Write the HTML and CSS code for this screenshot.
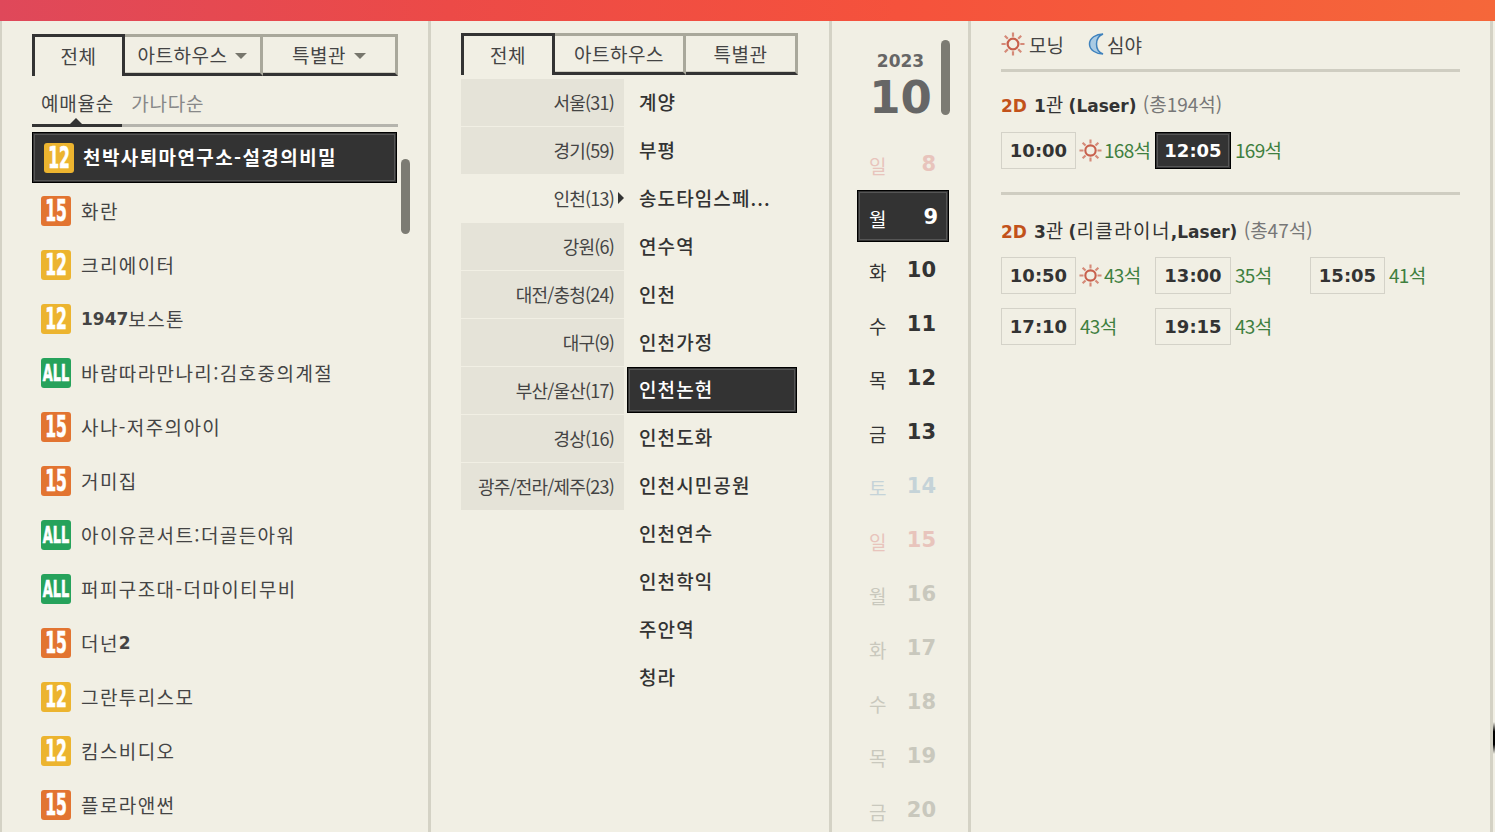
FILE: index.html
```html
<!DOCTYPE html>
<html lang="ko">
<head>
    <meta charset="UTF-8">
    <meta name="viewport" content="width=device-width, initial-scale=1.0">
    <title>빠른예매</title>
    <link rel="stylesheet" href="styles.css">
</head>
<body>
    <svg class="defs" width="0" height="0">
        <symbol id="sun" viewBox="0 0 24 24">
            <circle cx="12" cy="12" r="5.4" fill="none" stroke="#c8604c" stroke-width="2.2"/>
            <path d="M12 0.5v4.2M12 19.3v4.2M0.5 12h4.2M19.3 12h4.2M3.8 3.8l3 3M17.2 17.2l3 3M3.8 20.2l3-3M17.2 6.8l3-3" stroke="#d58a78" stroke-width="2.2" fill="none"/>
        </symbol>
    </svg>
    <div class="topbar"></div>
    <div class="app">
        <!-- movie column -->
        <section class="col col-movie">
            <div class="tabs tabs-movie">
                <div class="tab active">전체</div>
                <div class="tab">아트하우스<span class="caret"></span></div>
                <div class="tab">특별관<span class="caret"></span></div>
            </div>
            <div class="sort">
                <span class="sort-item on">예매율순</span>
                <span class="sort-item">가나다순</span>
            </div>
            <ul class="movies">
                <li class="movie selected"><span class="badge b12"><span>12</span></span>천박사퇴마연구소-설경의비밀</li>
                <li class="movie"><span class="badge b15"><span>15</span></span>화란</li>
                <li class="movie"><span class="badge b12"><span>12</span></span>크리에이터</li>
                <li class="movie"><span class="badge b12"><span>12</span></span><b class="num">1947</b>보스톤</li>
                <li class="movie"><span class="badge all"><span>ALL</span></span>바람따라만나리:김호중의계절</li>
                <li class="movie"><span class="badge b15"><span>15</span></span>사나-저주의아이</li>
                <li class="movie"><span class="badge b15"><span>15</span></span>거미집</li>
                <li class="movie"><span class="badge all"><span>ALL</span></span>아이유콘서트:더골든아워</li>
                <li class="movie"><span class="badge all"><span>ALL</span></span>퍼피구조대-더마이티무비</li>
                <li class="movie"><span class="badge b15"><span>15</span></span>더넌<b class="num">2</b></li>
                <li class="movie"><span class="badge b12"><span>12</span></span>그란투리스모</li>
                <li class="movie"><span class="badge b12"><span>12</span></span>킴스비디오</li>
                <li class="movie"><span class="badge b15"><span>15</span></span>플로라앤썬</li>
            </ul>
            <div class="thumb thumb-movie"></div>
        </section>

        <!-- theater column -->
        <section class="col col-theater">
            <div class="tabs tabs-theater">
                <div class="tab active">전체</div>
                <div class="tab">아트하우스</div>
                <div class="tab">특별관</div>
            </div>
            <div class="theater-body">
                <ul class="regions">
                    <li class="region">서울(31)</li>
                    <li class="region">경기(59)</li>
                    <li class="region on">인천(13)</li>
                    <li class="region">강원(6)</li>
                    <li class="region">대전/충청(24)</li>
                    <li class="region">대구(9)</li>
                    <li class="region">부산/울산(17)</li>
                    <li class="region">경상(16)</li>
                    <li class="region">광주/전라/제주(23)</li>
                </ul>
                <ul class="theaters">
                    <li class="theater">계양</li>
                    <li class="theater">부평</li>
                    <li class="theater">송도타임스페...</li>
                    <li class="theater">연수역</li>
                    <li class="theater">인천</li>
                    <li class="theater">인천가정</li>
                    <li class="theater selected">인천논현</li>
                    <li class="theater">인천도화</li>
                    <li class="theater">인천시민공원</li>
                    <li class="theater">인천연수</li>
                    <li class="theater">인천학익</li>
                    <li class="theater">주안역</li>
                    <li class="theater">청라</li>
                </ul>
            </div>
        </section>

        <!-- date column -->
        <section class="col col-date">
            <div class="month-head">
                <div class="year">2023</div>
                <div class="month">10</div>
            </div>
            <div class="thumb thumb-date"></div>
            <ul class="days">
                <li class="day sun-off"><span class="dn">일</span><b>8</b></li>
                <li class="day selected"><span class="dn">월</span><b>9</b></li>
                <li class="day"><span class="dn">화</span><b>10</b></li>
                <li class="day"><span class="dn">수</span><b>11</b></li>
                <li class="day"><span class="dn">목</span><b>12</b></li>
                <li class="day"><span class="dn">금</span><b>13</b></li>
                <li class="day sat-off"><span class="dn">토</span><b>14</b></li>
                <li class="day sun-off"><span class="dn">일</span><b>15</b></li>
                <li class="day off"><span class="dn">월</span><b>16</b></li>
                <li class="day off"><span class="dn">화</span><b>17</b></li>
                <li class="day off"><span class="dn">수</span><b>18</b></li>
                <li class="day off"><span class="dn">목</span><b>19</b></li>
                <li class="day off"><span class="dn">금</span><b>20</b></li>
            </ul>
        </section>

        <!-- showtime column -->
        <section class="col col-time">
            <div class="legend">
                <svg class="ico-sun-lg"><use href="#sun"/></svg><span class="legend-txt">모닝</span>
                <svg class="ico-moon" viewBox="0 0 18 22"><path d="M15 1C8 1 1.5 5 1.5 11S8 21 15 21C11 19.5 8.5 15.5 8.5 11S11 2.5 15 1Z" fill="#a9cbe4" stroke="#3f82bd" stroke-width="1.5"/></svg><span class="legend-txt">심야</span>
            </div>
            <div class="screen">
                <h3 class="screen-title"><span class="fmt">2D</span><b>1</b>관 <b>(Laser)</b> <span class="total">(총194석)</span></h3>
                <div class="slots">
                    <div class="slot"><span class="time">10:00</span><svg class="ico-sun"><use href="#sun"/></svg><span class="seats">168석</span></div>
                    <div class="slot"><span class="time selected">12:05</span><span class="seats">169석</span></div>
                </div>
            </div>
            <div class="screen">
                <h3 class="screen-title"><span class="fmt">2D</span><b>3</b>관 <b>(</b><span class="wide">리클라이너</span><b>,Laser)</b> <span class="total">(총47석)</span></h3>
                <div class="slots">
                    <div class="slot"><span class="time">10:50</span><svg class="ico-sun"><use href="#sun"/></svg><span class="seats">43석</span></div>
                    <div class="slot"><span class="time">13:00</span><span class="seats">35석</span></div>
                    <div class="slot"><span class="time">15:05</span><span class="seats">41석</span></div>
                    <div class="slot"><span class="time">17:10</span><span class="seats">43석</span></div>
                    <div class="slot"><span class="time">19:15</span><span class="seats">43석</span></div>
                </div>
            </div>
        </section>
    </div>
    <div class="edge-mark"></div>
</body>
</html>
```

FILE: styles.css
```css
/* General */
* {
    box-sizing: border-box;
}
html, body {
    height: 100%;
}
body {
    margin: 0;
    overflow: hidden;
    background: #f1efe4;
    color: #333;
    font-family: "Noto Sans CJK KR", "Noto Sans", sans-serif;
    font-size: 19px;
}
ul {
    list-style: none;
    margin: 0;
    padding: 0;
}
b, .year, .month, .time, .fmt {
    font-family: "DejaVu Sans", "Noto Sans CJK KR", sans-serif;
    font-weight: bold;
}
.defs {
    position: absolute;
}
.topbar {
    height: 21px;
    background: linear-gradient(90deg, #df485a 0%, #ec4a47 30%, #f5523c 60%, #f5673a 100%);
}
.app {
    display: flex;
    height: 811px;
    border-left: 2px solid #d4d2c5;
}
.col {
    position: relative;
    border-right: 3px solid #d4d2c5;
    overflow: hidden;
}
/* bit of another window showing at the right edge */
.edge-mark {
    position: absolute;
    right: 0;
    top: 722px;
    width: 2px;
    height: 32px;
    background: linear-gradient(180deg, transparent, #000 30%, #000 70%, transparent);
}

/* Tabs */
.tabs {
    display: flex;
    height: 42px;
}
.tab {
    display: flex;
    align-items: center;
    justify-content: center;
    padding-bottom: 2px;
    border: 3px solid #a9a89b;
    border-left: none;
    border-bottom-color: #333;
    box-shadow: inset 0 -1px 0 #cfcdc0;
    color: #444;
    letter-spacing: 0.5px;
}
.tab.active {
    border: 3px solid #333;
    border-bottom: none;
    box-shadow: none;
}
.tabs-movie {
    width: 366px;
}
.tabs-movie .tab:nth-child(1) { width: 93px; }
.tabs-movie .tab:nth-child(2) { width: 138px; }
.tabs-movie .tab:nth-child(3) { width: 135px; }
.tabs-theater {
    width: 337px;
}
.tabs-theater .tab:nth-child(1) { width: 94px; }
.tabs-theater .tab:nth-child(2) { width: 131px; }
.tabs-theater .tab:nth-child(3) { width: 112px; }
.caret {
    margin-left: 8px;
    margin-top: 3px;
    border-top: 6px solid #77766c;
    border-left: 6px solid transparent;
    border-right: 6px solid transparent;
}

/* Movie column */
.col-movie {
    width: 429px;
    padding: 13px 0 0 30px;
}
.sort {
    position: relative;
    display: flex;
    gap: 17px;
    width: 366px;
    height: 51px;
    padding: 14px 0 0 9px;
    line-height: 26px;
    border-bottom: 3px solid #b5b4ad;
    color: #888;
    letter-spacing: 0.8px;
}
.sort-item.on {
    color: #444;
}
.sort::before {
    content: '';
    position: absolute;
    left: 0;
    bottom: -3px;
    width: 90px;
    height: 3px;
    background: #333;
}
.sort::after {
    content: '';
    position: absolute;
    left: 38px;
    bottom: 0;
    border-bottom: 6px solid #333;
    border-left: 6px solid transparent;
    border-right: 6px solid transparent;
}
.movies {
    margin-top: 5px;
}
.movie {
    display: flex;
    align-items: center;
    height: 54px;
    padding-left: 9px;
    color: #444;
    line-height: 50px;
    white-space: nowrap;
    letter-spacing: 1.4px;
}
.movie.selected {
    width: 365px;
    height: 51px;
    margin-bottom: 1px;
    padding: 0 0 3px 11px;
    background: #333;
    border: 1px solid #000;
    outline: 1px solid #555;
    outline-offset: -3px;
    color: #fff;
    font-weight: bold;
    line-height: 45px;
}
.movie.selected .badge {
    margin: 3px 9px 0 0;
}
.badge {
    flex: none;
    display: flex;
    align-items: center;
    justify-content: center;
    width: 30px;
    height: 30px;
    margin-right: 10px;
    border-radius: 3px;
    color: #fff;
    font-family: "DejaVu Sans", sans-serif;
    font-weight: bold;
    font-size: 30px;
    line-height: 30px;
    letter-spacing: 0;
}
.badge span {
    flex: none;
    width: 30px;
    display: flex;
    justify-content: center;
    transform: scaleX(0.52);
    -webkit-text-stroke: 0.7px #fff;
}
.badge.all {
    font-size: 23px;
}
.badge.all span {
    transform: scaleX(0.56);
}
.b12 { background: #ecb42f; }
.b15 { background: #e27431; }
.all { background: #26a25b; }
.num {
    font-size: 17px;
    letter-spacing: 0;
}
.thumb {
    position: absolute;
    width: 9px;
    background: #7c7b73;
    border-radius: 5px;
}
.thumb-movie {
    left: 399px;
    top: 138px;
    height: 75px;
}

/* Theater column */
.col-theater {
    width: 401px;
    padding: 12px 0 0 30px;
}
.theater-body {
    display: flex;
    margin-top: 4px;
}
.regions {
    width: 163px;
}
.region {
    display: flex;
    align-items: center;
    justify-content: flex-end;
    height: 47px;
    margin-bottom: 1px;
    padding: 0 10px 2px 0;
    background: #e5e3d8;
    color: #444;
    font-size: 18px;
    letter-spacing: -0.8px;
    white-space: nowrap;
}
.region.on {
    position: relative;
    background: none;
}
.region.on::after {
    content: '';
    position: absolute;
    right: 0;
    top: 17px;
    border-left: 6px solid #333;
    border-top: 6px solid transparent;
    border-bottom: 6px solid transparent;
}
.theaters {
    margin-left: 3px;
    width: 170px;
}
.theater {
    display: flex;
    align-items: center;
    height: 48px;
    padding: 0 0 4px 12px;
    color: #333;
    font-weight: 500;
    letter-spacing: 1.1px;
    white-space: nowrap;
}
.theater.selected {
    height: 46px;
    margin-bottom: 1px;
    padding-bottom: 4px;
    padding-left: 11px;
    background: #333;
    border: 1px solid #000;
    outline: 1px solid #555;
    outline-offset: -3px;
    color: #fff;
}

/* Date column */
.col-date {
    width: 139px;
}
.month-head {
    height: 115px;
    padding-top: 28px;
    margin: 0 29px 0 30px;
    text-align: center;
    color: #666;
}
.year {
    font-size: 17px;
    line-height: 24px;
}
.month {
    font-size: 45px;
    line-height: 50px;
}
.thumb-date {
    left: 109px;
    top: 19px;
    height: 75px;
}
.days {
    margin-left: 25px;
    width: 92px;
}
.day {
    display: flex;
    align-items: center;
    justify-content: space-between;
    height: 54px;
    padding: 0 13px 0 12px;
    color: #333;
}
.day b {
    font-size: 21px;
    margin-top: 2px;
}
.dn {
    font-size: 19px;
    margin-top: 4px;
}
.day.selected {
    height: 52px;
    padding: 0 10px 0 11px;
    background: #333;
    border: 1px solid #000;
    outline: 1px solid #555;
    outline-offset: -3px;
    color: #fff;
}
.sun-off { color: #e8c4bc; }
.sat-off { color: #c5d3d8; }
.off { color: #c9c8bd; }

/* Showtime column */
.col-time {
    width: 522px;
    padding: 0 30px;
}
.legend {
    display: flex;
    align-items: center;
    height: 51px;
    padding-bottom: 2px;
    border-bottom: 3px solid #cfcdc1;
    color: #444;
}
.ico-sun-lg {
    width: 24px;
    height: 24px;
    margin-right: 4px;
}
.ico-moon {
    width: 18px;
    height: 22px;
    margin-left: 24px;
    margin-right: 1px;
}
.screen {
    height: 123px;
    padding-top: 18px;
    border-bottom: 3px solid #cfcdc1;
}
.screen:last-child {
    padding-top: 21px;
    border-bottom: none;
}
.screen-title {
    margin: 0 0 14px;
    height: 28px;
    line-height: 28px;
    font-size: 19px;
    font-weight: normal;
    white-space: nowrap;
}
.screen:last-child .screen-title {
    margin-bottom: 13px;
}
.screen-title b {
    font-size: 17px;
}
.wide {
    letter-spacing: 1.4px;
}
.fmt {
    font-size: 17px;
    color: #c2521a;
    margin-right: 7px;
}
.total {
    color: #777;
    margin-left: 1px;
}
.slots {
    display: grid;
    grid-template-columns: 154px 155px 150px;
    grid-auto-rows: 37px;
    row-gap: 14px;
}
.slot {
    display: flex;
    align-items: center;
}
.time {
    display: flex;
    align-items: center;
    justify-content: center;
    width: 75px;
    height: 37px;
    border: 1px solid #d4d2c8;
    font-size: 18px;
}
.slot:nth-child(3n+2) .time {
    width: 76px;
}
.time.selected {
    background: #333;
    border-color: #000;
    outline: 1px solid #555;
    outline-offset: -3px;
    color: #fff;
}
.ico-sun {
    width: 23px;
    height: 23px;
    margin-left: 3px;
}
.seats {
    margin: 0 0 2px 4px;
    color: #3f7f3f;
    letter-spacing: -0.7px;
}
.ico-sun + .seats {
    margin-left: 2px;
}
```
